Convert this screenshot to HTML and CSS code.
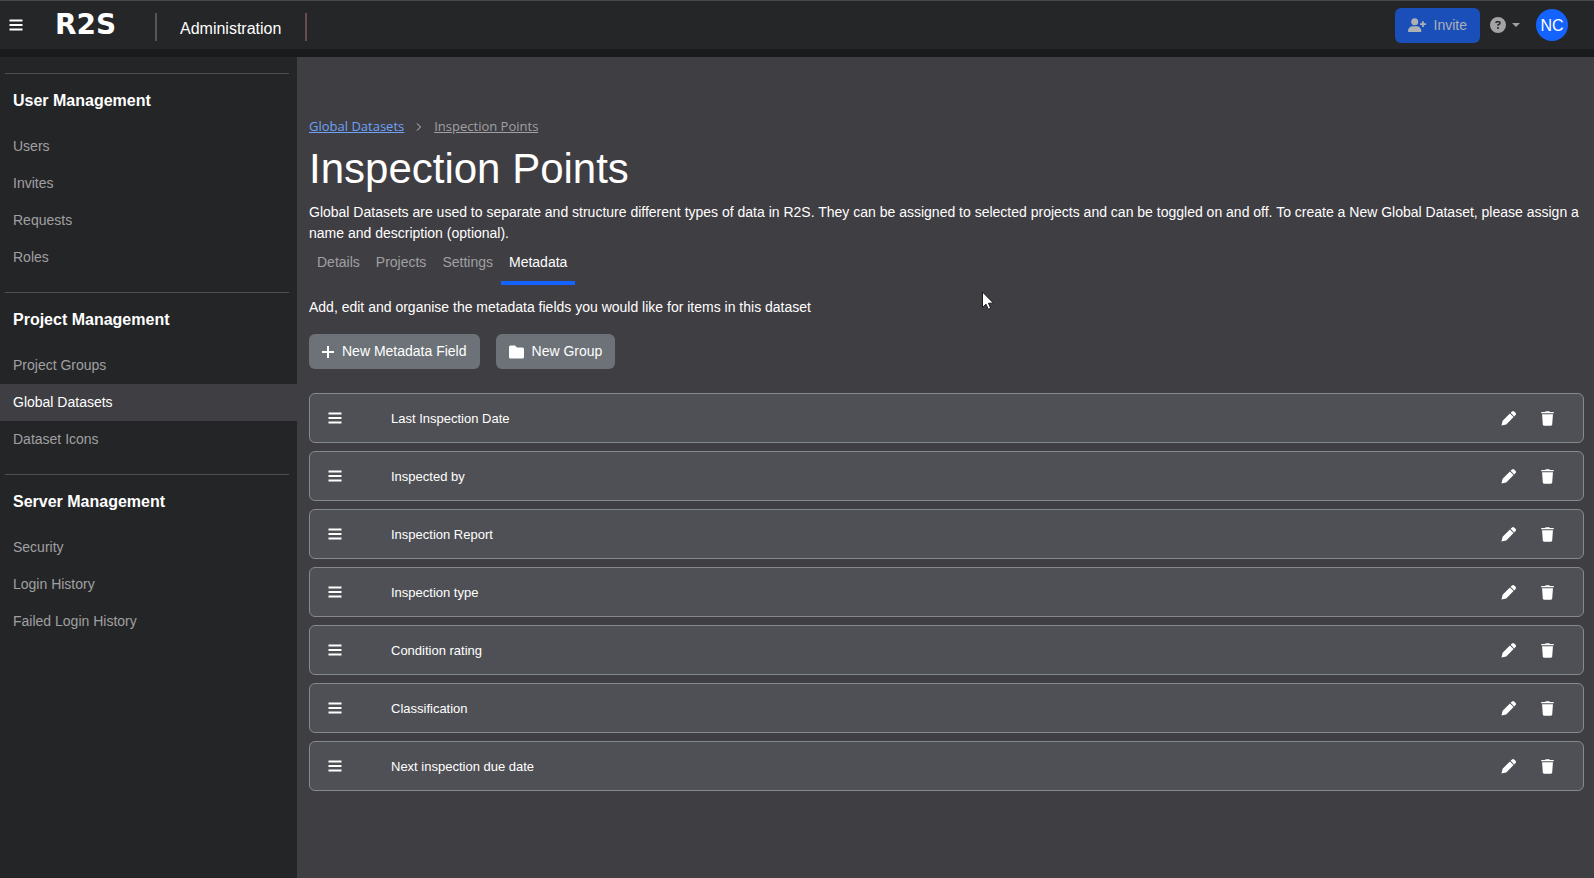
FILE: index.html
```html
<!DOCTYPE html>
<html lang="en">
<head>
<meta charset="utf-8">
<title>R2S Administration</title>
<link rel="stylesheet" href="styles.css">
</head>
<body>
<svg class="sprite" aria-hidden="true">
  <symbol id="bars" viewBox="0 0 14 14"><path d="M.5 1.500h13v2H.5zM.5 6h13v2H.5zM.5 10.500h13v2H.5z"/></symbol>
  <symbol id="pencil" viewBox="0 0 16 16"><path d="M10.200 1.900 11.500.7a2 2 0 0 1 2.800 0l1 1a2 2 0 0 1 0 2.800l-1.200 1.300zM9.500 2.600l3.900 3.900-7.800 7.800L.5 15.500l1.200-5.100z"/></symbol>
  <symbol id="trash" viewBox="0 0 14 16"><path d="M4.500 1 5 .3h4l.5.7H13c.5 0 .8.300.8.700v.8H.2v-.8C.2 1.300.5 1 1 1zM1.200 3.500h11.600l-.8 11c0 .7-.6 1.200-1.300 1.200H3.300c-.7 0-1.300-.5-1.300-1.200z"/></symbol>
</svg>

<header class="topbar">
  <button class="icon-button menu" type="button" aria-label="Menu"><svg class="icon"><use href="#bars"/></svg></button>
  <a class="logo" href="#">R2S</a>
  <div class="area">Administration</div>
  <div class="actions">
    <button class="invite" type="button"><svg class="invite-icon" viewBox="0 0 18 14"><path d="M3.200 3.700a3.500 3.500 0 1 1 7 0 3.500 3.500 0 1 1-7 0zM0 13.200C0 10.300 2.200 8.200 5 8.200h3.400c2.800 0 5 2.100 5 5 0 .5-.4.800-.8.800H.8c-.4 0-.8-.3-.8-.8zM14 3.200h1.800v2H18V7h-2.200v2H14V7h-2V5.200h2z"/></svg>Invite</button>
    <button class="help" type="button" aria-label="Help"><svg class="help-icon" viewBox="0 0 512 512"><path d="M256 512A256 256 0 1 0 256 0a256 256 0 1 0 0 512zM169.800 165.300c7.900-22.300 29.100-37.300 52.800-37.300h58.300c34.900 0 63.100 28.300 63.100 63.100 0 22.600-12.100 43.500-31.700 54.800L280 264.400c-.2 13-10.900 23.600-24 23.600-13.300 0-24-10.700-24-24v-13.500c0-8.600 4.600-16.500 12.100-20.800l44.300-25.400c4.700-2.700 7.600-7.700 7.600-13.100 0-8.400-6.800-15.100-15.100-15.100h-58.300c-3.400 0-6.400 2.100-7.500 5.300l-.4 1.200c-4.400 12.500-18.200 19-30.600 14.600s-19-18.200-14.600-30.600zM224 352a32 32 0 1 1 64 0 32 32 0 1 1-64 0z"/></svg><svg class="caret" viewBox="0 0 8 4"><path d="M0 0h8L4 4z"/></svg></button>
    <button class="avatar" type="button" aria-label="Account">NC</button>
  </div>
</header>

<div class="layout">
  <nav class="sidebar" aria-label="Administration">
    <section class="group">
      <h2 class="group-title">User Management</h2>
      <a class="nav-link" href="#">Users</a>
      <a class="nav-link" href="#">Invites</a>
      <a class="nav-link" href="#">Requests</a>
      <a class="nav-link" href="#">Roles</a>
    </section>
    <section class="group">
      <h2 class="group-title">Project Management</h2>
      <a class="nav-link" href="#">Project Groups</a>
      <a class="nav-link active" href="#" aria-current="page">Global Datasets</a>
      <a class="nav-link" href="#">Dataset Icons</a>
    </section>
    <section class="group">
      <h2 class="group-title">Server Management</h2>
      <a class="nav-link" href="#">Security</a>
      <a class="nav-link" href="#">Login History</a>
      <a class="nav-link" href="#">Failed Login History</a>
    </section>
  </nav>

  <main class="main">
    <div class="breadcrumb">
      <a class="crumb" href="#">Global Datasets</a>
      <svg class="chevron" viewBox="0 0 6 8"><path d="M1 .5 4.500 4 1 7.500"/></svg>
      <a class="crumb current" href="#">Inspection Points</a>
    </div>
    <h1 class="title">Inspection Points</h1>
    <p class="text">Global Datasets are used to separate and structure different types of data in R2S. They can be assigned to selected projects and can be toggled on and off. To create a New Global Dataset, please assign a name and description (optional).</p>
    <div class="tabs" role="tablist">
      <button class="tab" type="button" role="tab">Details</button>
      <button class="tab" type="button" role="tab">Projects</button>
      <button class="tab" type="button" role="tab">Settings</button>
      <button class="tab selected" type="button" role="tab" aria-selected="true">Metadata</button>
    </div>
    <p class="text hint">Add, edit and organise the metadata fields you would like for items in this dataset</p>
    <div class="toolbar">
      <button class="button" type="button"><svg class="plus" viewBox="0 0 12 12"><path d="M6 0v12M0 6h12"/></svg>New Metadata Field</button>
      <button class="button" type="button"><svg class="folder" viewBox="0 0 15 14"><path d="M1.500.5H6l2 2h5.500A1.500 1.500 0 0 1 15 4v8a1.500 1.500 0 0 1-1.500 1.500h-12A1.500 1.500 0 0 1 0 12V2A1.500 1.500 0 0 1 1.500.5z"/></svg>New Group</button>
    </div>
    <ul class="fields">
      <li class="field"><svg class="icon"><use href="#bars"/></svg><span class="name">Last Inspection Date</span><button class="icon-button" type="button" aria-label="Edit"><svg class="icon"><use href="#pencil"/></svg></button><button class="icon-button" type="button" aria-label="Delete"><svg class="icon"><use href="#trash"/></svg></button></li>
      <li class="field"><svg class="icon"><use href="#bars"/></svg><span class="name">Inspected by</span><button class="icon-button" type="button" aria-label="Edit"><svg class="icon"><use href="#pencil"/></svg></button><button class="icon-button" type="button" aria-label="Delete"><svg class="icon"><use href="#trash"/></svg></button></li>
      <li class="field"><svg class="icon"><use href="#bars"/></svg><span class="name">Inspection Report</span><button class="icon-button" type="button" aria-label="Edit"><svg class="icon"><use href="#pencil"/></svg></button><button class="icon-button" type="button" aria-label="Delete"><svg class="icon"><use href="#trash"/></svg></button></li>
      <li class="field"><svg class="icon"><use href="#bars"/></svg><span class="name">Inspection type</span><button class="icon-button" type="button" aria-label="Edit"><svg class="icon"><use href="#pencil"/></svg></button><button class="icon-button" type="button" aria-label="Delete"><svg class="icon"><use href="#trash"/></svg></button></li>
      <li class="field"><svg class="icon"><use href="#bars"/></svg><span class="name">Condition rating</span><button class="icon-button" type="button" aria-label="Edit"><svg class="icon"><use href="#pencil"/></svg></button><button class="icon-button" type="button" aria-label="Delete"><svg class="icon"><use href="#trash"/></svg></button></li>
      <li class="field"><svg class="icon"><use href="#bars"/></svg><span class="name">Classification</span><button class="icon-button" type="button" aria-label="Edit"><svg class="icon"><use href="#pencil"/></svg></button><button class="icon-button" type="button" aria-label="Delete"><svg class="icon"><use href="#trash"/></svg></button></li>
      <li class="field"><svg class="icon"><use href="#bars"/></svg><span class="name">Next inspection due date</span><button class="icon-button" type="button" aria-label="Edit"><svg class="icon"><use href="#pencil"/></svg></button><button class="icon-button" type="button" aria-label="Delete"><svg class="icon"><use href="#trash"/></svg></button></li>
    </ul>
  </main>
</div>
<svg class="pointer" viewBox="0 0 12 19" aria-hidden="true"><path d="M.5 1v15.500l3.500-3.300 2.300 5.100 2.400-1.100L6.500 12.200h5z"/></svg>
</body>
</html>
```
FILE: styles.css
```css
* { box-sizing: border-box; }

body {
  margin: 0;
  min-height: 100vh;
  display: flex;
  flex-direction: column;
  background: #3f3e43;
  color: #fff;
  font: 14px/21px "Liberation Sans", Arial, sans-serif;
}

button {
  border: 0;
  padding: 0;
  background: none;
  color: inherit;
  font: inherit;
  cursor: pointer;
}

h1, h2, p, ul { margin: 0; padding: 0; font-weight: 400; }

.sprite { position: absolute; width: 0; height: 0; }

svg { display: block; fill: currentColor; flex: none; }

.icon { width: 14px; height: 14px; }

/* Top bar */
.topbar {
  display: flex;
  align-items: center;
  height: 57px;
  padding: 0 26px 0 9px;
  background: #252628;
  border-top: 1px solid #47484a;
  border-bottom: 8px solid #1a1b1d;
}

.logo {
  width: 100px;
  margin-left: 32px;
  color: #fff;
  font: 700 28px/32px "DejaVu Sans", sans-serif;
  text-decoration: none;
}

.area {
  margin-top: 4px;
  padding: 4px 24px 0 23px;
  border: solid #555558;
  border-width: 0 2px;
  border-right-color: #6b4a50;
  font-size: 16px;
  line-height: 24px;
}

.actions {
  display: flex;
  align-items: center;
  margin-left: auto;
}

.invite {
  display: flex;
  align-items: center;
  gap: 8px;
  height: 35px;
  padding: 0 13px;
  border-radius: 6px;
  background: #1a4fb9;
  color: #adb0b5;
}

.invite-icon { width: 18px; height: 14px; }

.help {
  display: flex;
  align-items: center;
  gap: 6px;
  margin: 0 16px 0 10px;
  color: #a3a3a5;
}

.help-icon { width: 16px; height: 16px; }

.caret { width: 8px; height: 4px; }

.avatar {
  width: 32px;
  height: 32px;
  border-radius: 50%;
  background: #1463ff;
  font-size: 16px;
}

.layout { display: flex; flex: 1; }

/* Sidebar */
.sidebar {
  flex: none;
  width: 297px;
  padding-top: 16px;
  background: #242527;
}

.group { padding-bottom: 16px; }

.group::before {
  content: "";
  display: block;
  height: 1px;
  margin: 0 8px 0 5px;
  background: #4e4f51;
}

.group-title {
  padding: 16px 13px;
  font-size: 16px;
  font-weight: 700;
  line-height: 22px;
}

.nav-link {
  display: block;
  padding: 8px 13px;
  color: #a0a0a2;
  text-decoration: none;
}

.nav-link.active { background: #3f3e43; color: #fff; }

/* Main column */
.main {
  flex: 1;
  min-width: 0;
  padding: 59px 10px 16px 12px;
}

.breadcrumb {
  display: flex;
  align-items: center;
  gap: 12px;
  font: 13px/21px "Open Sans", sans-serif;
}

.crumb { color: #6ea3f7; }

.crumb.current { color: #a0a0a2; }

.chevron {
  width: 6px;
  height: 8px;
  fill: none;
  stroke: #c5c5c7;
}

.title {
  padding: 6px 0 7px;
  font-size: 42px;
  line-height: 52px;
}

.tabs { display: flex; }

.tab {
  height: 41px;
  padding: 0 8px 5px;
  color: #a0a0a2;
}

.tab.selected {
  padding-bottom: 1px;
  border-bottom: 4px solid #1463ff;
  color: #fff;
}

.hint { padding: 12px 0 16px; }

.toolbar {
  display: flex;
  gap: 16px;
  margin-bottom: 24px;
}

.button {
  display: flex;
  align-items: center;
  gap: 8px;
  height: 35px;
  padding: 0 13px;
  border-radius: 6px;
  background: #6c7277;
}

.plus {
  width: 12px;
  height: 12px;
  stroke: currentColor;
  stroke-width: 2;
}

.folder { width: 15px; height: 14px; }

.fields {
  display: flex;
  flex-direction: column;
  gap: 8px;
  list-style: none;
}

.field {
  display: flex;
  align-items: center;
  height: 50px;
  padding: 0 28px 0 18px;
  border: 1px solid #858a90;
  border-radius: 6px;
  background: #4f5055;
  font-size: 13px;
}

.name { flex: 1; padding-left: 49px; }

.icon-button + .icon-button { margin-left: 25px; }

.field .icon-button .icon { width: 15px; height: 15px; }

.field .icon-button + .icon-button { margin-left: 24px; }

.pointer {
  position: absolute;
  left: 982px;
  top: 291px;
  width: 12px;
  height: 19px;
  fill: #fff;
  stroke: #1a1a1e;
}
```
